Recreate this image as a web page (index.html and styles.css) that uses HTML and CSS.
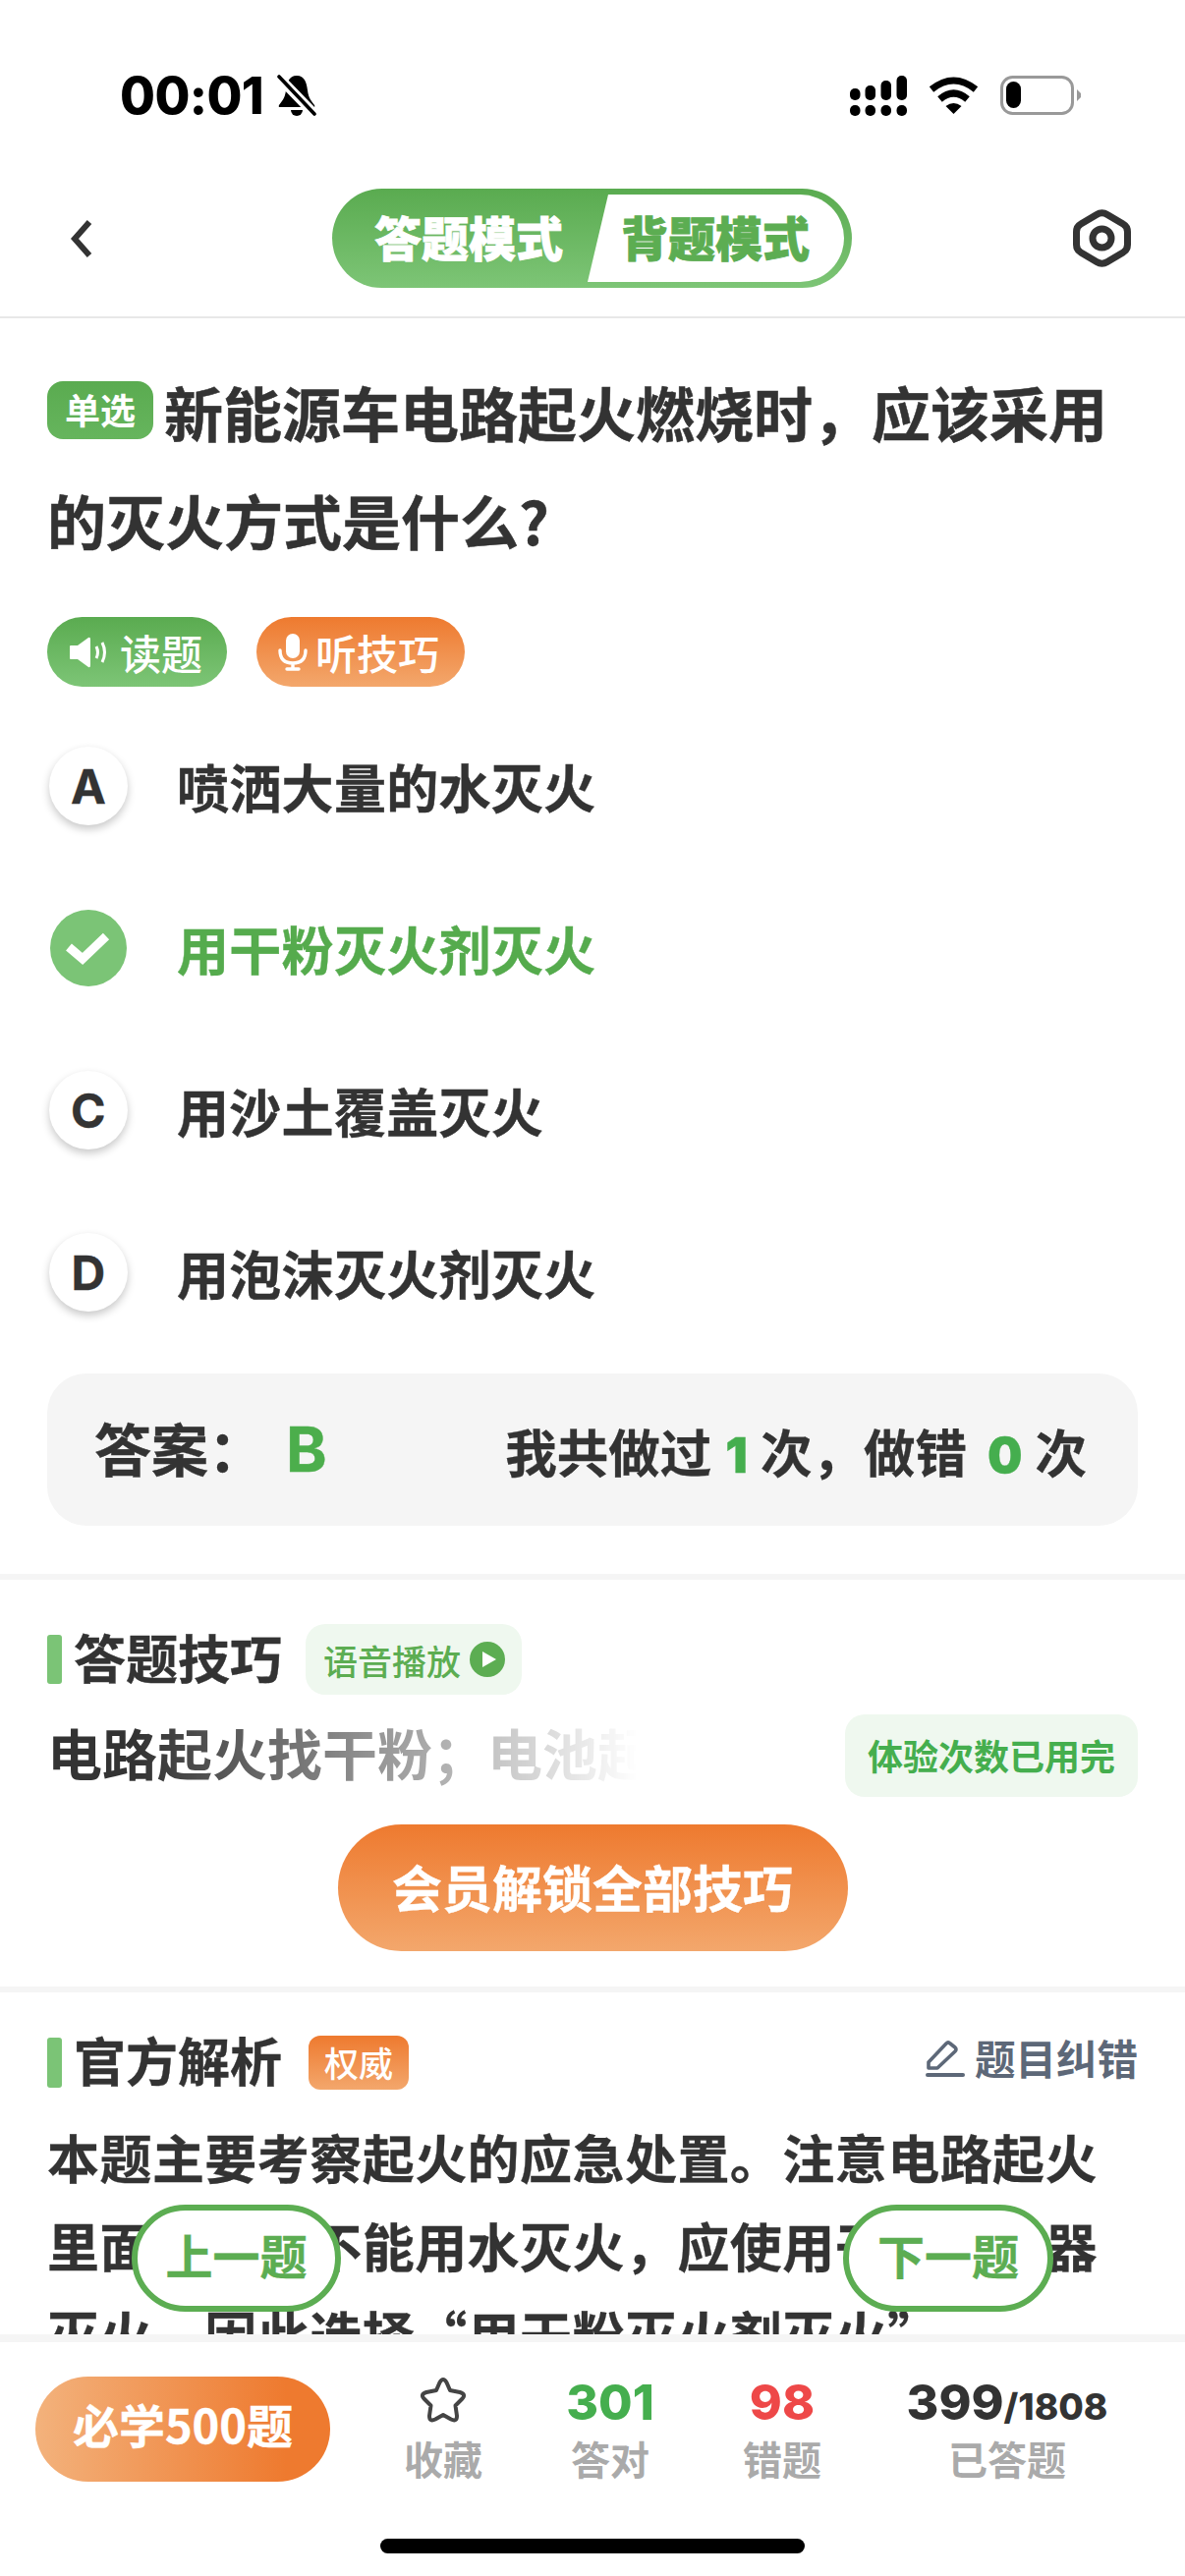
FILE: index.html
```html
<!DOCTYPE html>
<html lang="zh-CN">
<head>
<meta charset="utf-8">
<title>答题模式</title>
<link rel="stylesheet" href="styles.css">
</head>
<body>
<div class="app">
  <header class="status">
    <div class="status-left">
      <span class="time">00:01</span>
      <svg class="bell" width="40" height="43" viewBox="0 0 40 43"><path d="M20 1C12 1 10 8 9 16C8 24 5 27 2 31Q1 33 3 33L37 33Q39 33 38 31C35 27 32 24 31 16C30 8 28 1 20 1Z"/><path d="M14 36a6 6 0 0 0 12 0z"/><path d="M2 3L38 40" stroke="#fff" stroke-width="10"/><path d="M2 2L38 40" stroke="#000" stroke-width="3.6" stroke-linecap="round"/></svg>
    </div>
    <div class="status-right">
      <svg width="58" height="41" viewBox="0 0 58 41"><rect x="0" y="13" width="10.5" height="12" rx="5"/><rect x="15.5" y="10" width="10.5" height="15" rx="5"/><rect x="31.5" y="5" width="10.5" height="20" rx="5"/><rect x="47.5" y="0" width="10.5" height="25" rx="5"/><rect x="0" y="30" width="10.5" height="11" rx="5"/><rect x="15.5" y="30" width="10.5" height="11" rx="5"/><rect x="31.5" y="30" width="10.5" height="11" rx="5"/><rect x="47.5" y="30" width="10.5" height="11" rx="5"/></svg>
      <svg width="51" height="38" viewBox="0 0 51 38"><path d="M3 13Q25.5 -5 48 13" fill="none" stroke="#000" stroke-width="7"/><path d="M11.5 23Q25.5 11 39.5 23" fill="none" stroke="#000" stroke-width="7"/><path d="M17.5 30Q25.5 24 33.5 30L25.5 38Z"/></svg>
      <svg width="82" height="40" viewBox="0 0 82 40"><rect x="1.5" y="1.5" width="72" height="37" rx="11" fill="none" stroke="#999" stroke-width="3"/><rect x="6" y="6" width="15" height="27" rx="7.5"/><path d="M78 14L82 18L82 22L78 26Z" fill="#999"/></svg>
    </div>
  </header>

  <nav class="nav">
    <div class="nav-back"><svg width="24" height="40" viewBox="0 0 24 40"><path d="M20 3L5 20L20 37" fill="none" stroke="#333" stroke-width="6"/></svg></div>
    <div class="toggle">
      <span class="toggle-on">答题模式</span>
      <span class="toggle-off">背题模式</span>
    </div>
    <svg width="59" height="61" viewBox="0 0 59 61"><path d="M24 6.5Q29.5 3 35 6.5L51 16Q55.5 18.5 55.5 24L55.5 37Q55.5 42.5 51 45L35 54.5Q29.5 58 24 54.5L8 45Q3.5 42.5 3.5 37L3.5 24Q3.5 18.5 8 16Z" fill="none" stroke="#333" stroke-width="7"/><circle cx="29.5" cy="30.5" r="9.5" fill="none" stroke="#333" stroke-width="7"/></svg>
  </nav>

  <main class="main">
    <section class="question">
      <h1 class="title"><span class="tag">单选</span>新能源车电路起火燃烧时，应该采用的灭火方式是什么?</h1>
      <div class="actions">
        <button class="pill pill-green"><svg width="40" height="32" viewBox="0 0 40 32"><path d="M0 10Q0 9 1 9L8 9L19 1Q21 0 21 3L21 29Q21 32 19 31L8 23L1 23Q0 23 0 22Z" fill="#fff"/><path d="M27 10Q30 16 27 22M33 6Q38 16 33 26" fill="none" stroke="#fff" stroke-width="3"/></svg>读题</button>
        <button class="pill pill-orange"><svg width="30" height="38" viewBox="0 0 30 38"><rect x="8" y="0" width="14" height="25" rx="7" fill="#fff"/><path d="M2 17Q2 30 15 30Q28 30 28 17M15 30L15 36M9 36L21 36" fill="none" stroke="#fff" stroke-width="3.4" stroke-linecap="round"/></svg>听技巧</button>
      </div>
      <ul class="options">
        <li class="option"><span class="letter">A</span>喷洒大量的水灭火</li>
        <li class="option option-right"><svg class="check" width="78" height="78" viewBox="0 0 78 78"><circle cx="39" cy="39" r="39" fill="#7bc476"/><path d="M19 38L33 50L57 27" fill="none" stroke="#fff" stroke-width="9"/></svg>用干粉灭火剂灭火</li>
        <li class="option"><span class="letter">C</span>用沙土覆盖灭火</li>
        <li class="option"><span class="letter">D</span>用泡沫灭火剂灭火</li>
      </ul>
      <div class="answer">
        <div class="answer-key">答案：<b class="answer-b">B</b></div>
        <div class="answer-count">我共做过<b class="num">1</b>次，做错<b class="num num-wide">0</b>次</div>
      </div>
    </section>

    <section class="tips">
      <div class="head">
        <i class="bar"></i><h2 class="head-title">答题技巧</h2>
        <span class="voice">语音播放<svg width="36" height="36" viewBox="0 0 36 36"><circle cx="18" cy="18" r="18" fill="#5cad52"/><path d="M13 10L27 18L13 26Z" fill="#fff"/></svg></span>
      </div>
      <div class="tip-row">
        <p class="tip-text">电路起火找干粉；电池起火</p>
        <span class="trial">体验次数已用完</span>
      </div>
      <button class="unlock">会员解锁全部技巧</button>
    </section>

    <section class="analysis">
      <div class="head head-an">
        <i class="bar"></i><h2 class="head-title">官方解析</h2>
        <span class="auth">权威</span>
        <span class="report"><svg width="40" height="40" viewBox="0 0 40 40"><path d="M3 25L21 6Q23 4 25 6L30 10Q32 12 30 14L12 31L3 31Z" fill="none" stroke="#5d6878" stroke-width="3.6" stroke-linejoin="round"/><path d="M2 38L38 38" stroke="#5d6878" stroke-width="4" stroke-linecap="round"/></svg>题目纠错</span>
      </div>
      <p class="body">本题主要考察起火的应急处置。注意电路起火里面有电，不能用水灭火，应使用干粉灭火器灭火。因此选择“用干粉灭火剂灭火”</p>
    </section>
  </main>

  <button class="float float-prev">上一题</button>
  <button class="float float-next">下一题</button>

  <footer class="footer">
    <div class="footer-row">
      <button class="must">必学500题</button>
      <div class="stats">
        <div class="stat"><svg class="star" width="50" height="48" viewBox="0 0 50 48"><path d="M21.5 6Q25 0 28.5 6L32 14L42 16Q49 18 44 23L37.5 29.5L39 40Q39 46.5 33 43.5L25 39L17 43.5Q11 46.5 11 40L12.5 29.5L6 23Q1 18 8 16L18 14Z" fill="none" stroke="#444" stroke-width="4" stroke-linejoin="round"/></svg><span class="stat-label">收藏</span></div>
        <div class="stat"><b class="stat-num green">301</b><span class="stat-label">答对</span></div>
        <div class="stat"><b class="stat-num red">98</b><span class="stat-label">错题</span></div>
        <div class="stat"><b class="stat-num">399<small class="stat-total">/1808</small></b><span class="stat-label">已答题</span></div>
      </div>
    </div>
    <div class="home"></div>
  </footer>
</div>
</body>
</html>
```
FILE: styles.css
```css
* { box-sizing: border-box; margin: 0; padding: 0; }
html, body { width: 1206px; height: 2622px; overflow: hidden; background: #fff; }
body { font-family: "Noto Sans CJK SC", "Noto Sans", sans-serif; color: #333; }
button { font-family: inherit; border: 0; background: none; display: block; }
ul { list-style: none; }
.app { position: relative; width: 1206px; height: 2622px; display: flex; flex-direction: column; overflow: hidden; background: #fff; }

.status { flex: 0 0 192px; display: flex; justify-content: space-between; align-items: flex-start; padding: 76px 106px 0 122px; }
.status-left { display: flex; align-items: flex-start; gap: 14px; }
.time { font-family: Inter, sans-serif; font-weight: 800; font-size: 52px; line-height: 44px; color: #000; letter-spacing: -.6px; width: 146px; white-space: nowrap; }
.status-right { display: flex; align-items: flex-start; gap: 22px; padding-top: 1px; }
.status-right svg:nth-child(2) { margin-top: 1px; }

.nav { flex: 0 0 132px; display: flex; align-items: center; padding: 0 55px 29px 71px; border-bottom: 2px solid #e8e8e8; }
.nav-back { flex: 0 0 267px; display: flex; }
.toggle { width: 529px; height: 101px; margin-right: auto; padding: 6px 8px 6px 0; display: flex; align-items: stretch; border-radius: 51px; background: linear-gradient(180deg, #5aab50, #7dc576); font-weight: 900; font-size: 48px; line-height: 84px; -webkit-text-stroke: .8px currentColor; }
.toggle-on { flex: 0 0 260px; color: #fff; padding-left: 43px; white-space: nowrap; }
.toggle-off { flex: 1; background: #fff; color: #5cad52; border-radius: 0 45px 45px 0; padding-left: 34px; white-space: nowrap; clip-path: polygon(21px 0, 100% 0, 100% 100%, 0 100%); }

.main { flex: 1; min-height: 0; overflow: hidden; }
.question { padding: 40px 48px 49px; border-bottom: 6px solid #f5f5f5; }
.title { font-size: 60px; line-height: 110px; font-weight: 700; -webkit-text-stroke: .5px currentColor; }
.tag { display: inline-block; width: 108px; height: 59px; margin: -20px 11px -20px 0; border-radius: 16px; background: linear-gradient(180deg, #5aab50, #66b55d); color: #fff; font-size: 36px; line-height: 56px; text-align: center; vertical-align: 13px; -webkit-text-stroke: 0; }
.actions { display: flex; gap: 30px; margin-top: 44px; }
.pill { height: 71px; border-radius: 36px; color: #fff; font-size: 42px; font-weight: 500; display: flex; align-items: center; line-height: 1; }
.pill-green { width: 183px; padding-left: 23px; gap: 11px; background: linear-gradient(180deg, #5aab50, #7dc576); }
.pill-orange { width: 212px; padding-left: 22px; gap: 8px; background: linear-gradient(180deg, #ee7a2f, #f3a76c); }
.options { margin-top: 18px; }
.option { height: 165px; display: flex; align-items: center; font-size: 53px; letter-spacing: .3px; font-weight: 700; -webkit-text-stroke: .4px currentColor; padding-left: 2px; }
.option-right { color: #55ab4d; }
.letter { flex: 0 0 80px; height: 80px; margin-right: 50px; border-radius: 50%; background: #fff; box-shadow: 0 4px 8px rgba(0, 0, 0, .22); display: flex; align-items: center; justify-content: center; font-family: Inter, sans-serif; font-weight: 700; font-size: 48px; padding-top: 2px; }
.check { flex: none; margin: 0 51px 0 1px; }
.answer { margin-top: 21px; height: 155px; border-radius: 40px; background: #f5f5f5; display: flex; justify-content: space-between; align-items: center; padding: 0 52px 0 48px; font-weight: 700; }
.answer-key { font-size: 58px; line-height: 1; white-space: nowrap; -webkit-text-stroke: .4px currentColor; }
.answer-b { font-family: Inter, sans-serif; font-weight: 700; color: #4cae4c; font-size: 63px; margin-left: 21px; }
.answer-count { font-size: 52.5px; white-space: nowrap; -webkit-text-stroke: .3px currentColor; }
.num { font-family: Inter, sans-serif; color: #45ae4e; font-size: 50px; margin: 0 13px 0 14px; }
.num-wide { margin: 0 13px 0 21px; }

.tips { padding: 45px 48px 36px; border-bottom: 6px solid #f5f5f5; }
.head { display: flex; align-items: center; height: 72px; }
.bar { flex: 0 0 15px; height: 50px; border-radius: 3px; background: #7bc476; margin-right: 12px; }
.head-title { font-size: 53px; font-weight: 700; line-height: 1; white-space: nowrap; -webkit-text-stroke: .4px currentColor; margin-bottom: 6px; }
.voice { margin-left: 24px; width: 220px; height: 72px; display: flex; align-items: center; gap: 9px; padding-left: 18px; border-radius: 20px; background: #eff8ef; color: #5cad52; font-size: 35px; font-weight: 500; white-space: nowrap; }
.tip-row { margin-top: 20px; height: 84px; display: flex; justify-content: space-between; align-items: center; }
.tip-text { width: 620px; overflow: hidden; white-space: nowrap; font-size: 56px; font-weight: 700; -webkit-mask-image: linear-gradient(90deg, #000 90px, transparent 600px); mask-image: linear-gradient(90deg, #000 90px, transparent 600px); margin-top: -10px; }
.trial { width: 298px; height: 84px; border-radius: 20px; background: #eff8ef; color: #45ae4e; font-size: 36px; font-weight: 700; line-height: 82px; text-align: center; white-space: nowrap; }
.unlock { width: 519px; height: 129px; margin: 28px auto 0; border-radius: 65px; background: linear-gradient(180deg, #ee7a2f, #f3a76c); color: #fff; font-size: 51px; font-weight: 700; -webkit-text-stroke: .4px currentColor; padding-bottom: 4px; }

.analysis { padding: 41px 48px 0; }
.head-an { height: 61px; }
.head-an .bar { height: 51px; }
.auth { margin-left: 27px; width: 102px; height: 55px; border-radius: 12px; background: linear-gradient(180deg, #ee7a2f, #f3a76c); color: #fff; font-size: 35px; font-weight: 500; line-height: 53px; text-align: center; }
.report { margin-left: auto; display: flex; align-items: center; gap: 10px; color: #5d6878; font-size: 41.5px; font-weight: 700; margin-bottom: 12px; }
.body { margin-top: 20px; font-size: 53px; line-height: 90px; font-weight: 700; letter-spacing: .45px; -webkit-text-stroke: .3px currentColor; }

.float { position: absolute; top: 2244px; height: 109px; border-radius: 55px; border: 6px solid #5cad52; background: #fff; color: #5cad52; font-size: 48px; font-weight: 700; text-align: center; padding-bottom: 10px; -webkit-text-stroke: .4px currentColor; }
.float-prev { left: 134px; width: 213px; }
.float-next { left: 858px; width: 214px; }

.footer { flex: 0 0 246px; background: #fff; border-top: 8px solid #f5f5f5; }
.footer-row { display: flex; margin-top: 35px; padding-left: 36px; height: 107px; }
.must { flex: 0 0 300px; height: 107px; border-radius: 54px; background: linear-gradient(90deg, #f3b27c, #ee7a2f 85%); color: #fff; font-size: 47px; font-weight: 700; white-space: nowrap; padding-bottom: 12px; -webkit-text-stroke: .4px currentColor; }
.stats { margin-left: 40px; display: grid; grid-template-columns: 150px 190px 160px 298px; }
.stat { display: flex; flex-direction: column; align-items: center; }
.star { display: block; height: 52px; padding-bottom: 4px; }
.stat-num { font-family: Inter, sans-serif; font-weight: 800; font-size: 50px; line-height: 52px; height: 52px; color: #333; white-space: nowrap; }
.stat-total { font-size: 37px; line-height: 1; }
.green { color: #45ae4e; }
.red { color: #ee4848; }
.stat-label { margin-top: 1px; font-size: 40px; line-height: 60px; color: #aaa; font-weight: 700; white-space: nowrap; }
.home { width: 432px; height: 15px; margin: 58px auto 0; border-radius: 8px; background: #000; }
```
